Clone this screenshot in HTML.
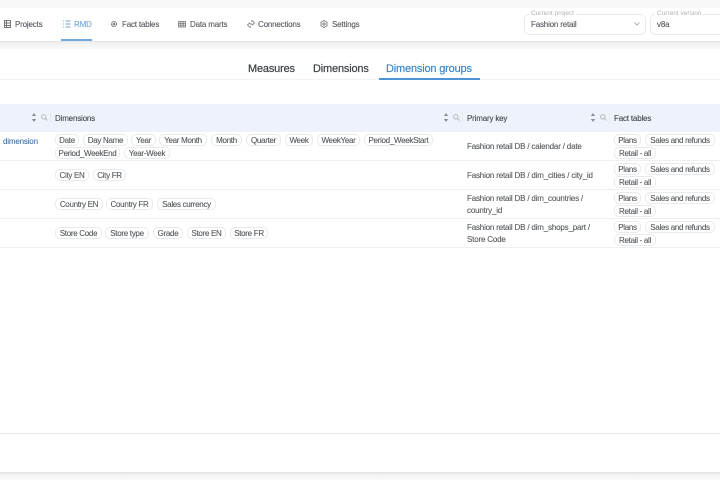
<!DOCTYPE html>
<html><head><meta charset="utf-8">
<style>
html,body{margin:0;padding:0;width:720px;height:480px;overflow:hidden;background:#fff}
body{font-family:"Liberation Sans",sans-serif;color:#3f4347;position:relative}
.a{position:absolute;white-space:nowrap}
.t{position:absolute;white-space:nowrap;font-size:8px;letter-spacing:-.18px;line-height:14px;color:#53575c;-webkit-text-stroke:.1px currentColor}
.c{position:absolute;box-sizing:border-box;height:12px;border:1px solid #e9eaec;border-radius:5px;font-size:8px;letter-spacing:-.3px;line-height:12px;text-align:center;color:#53575c;white-space:nowrap;background:#fff;-webkit-text-stroke:.1px currentColor}
.l{position:absolute;left:0;width:720px;height:1px;background:#eeeff0}
.h{font-size:11px;letter-spacing:-.18px;line-height:14px;-webkit-text-stroke:.2px currentColor}
svg{position:absolute;overflow:visible}
</style></head><body>
<div class="a" style="left:0;top:0;width:720px;height:8px;background:#f8f8f8"></div>
<div class="a" style="left:0;top:41px;width:720px;height:8px;background:linear-gradient(#e4e4e4,#f3f3f3 30%,#f8f8f8)"></div>

<svg style="left:4px;top:20px" width="8" height="9" fill="none" stroke="#777" stroke-width="1"><rect x=".5" y=".5" width="6" height="7"/><path d="M.5 3h6M.5 5.500h6M2.500 .5v7"/></svg>
<div class="t" style="left:15px;top:18px">Projects</div>
<svg style="left:63px;top:20px" width="8" height="8" fill="none" stroke="#6fa8dc" stroke-width=".9"><path d="M2.500 1h5M2.500 4h5M2.500 7h5M.5 .5v1M.5 3.500v1M.5 6.500v1"/></svg>
<div class="t" style="left:74px;top:18px;color:#6aa4da">RMD</div>
<div class="a" style="left:61px;top:39px;width:31px;height:2px;background:#6fa8dc"></div>
<svg style="left:110px;top:20px" width="8" height="8" fill="none" stroke="#777" stroke-width="1"><circle cx="4" cy="4" r="2.500" stroke-dasharray="1.300 .3"/><circle cx="4" cy="4" r=".8"/></svg>
<div class="t" style="left:122px;top:18px">Fact tables</div>
<svg style="left:178px;top:21px" width="9" height="7" fill="none" stroke="#777" stroke-width=".8"><rect x=".5" y=".5" width="7" height="5.500"/><path d="M.5 2.300h7M.5 4.200h7M2.800 .5v5.500M5.200 .5v5.500"/></svg>
<div class="t" style="left:190px;top:18px">Data marts</div>
<svg style="left:247px;top:20px" width="8" height="8" fill="none" stroke="#888" stroke-width=".9"><path d="M4 1.500l1-1 2.500 2.500-2 2-1.500-1.500M4 4.500L2.500 3 .5 5l2.500 2.500 1-1"/></svg>
<div class="t" style="left:258px;top:18px">Connections</div>
<svg style="left:320px;top:20px" width="8" height="8" fill="none" stroke="#777" stroke-width=".9"><path d="M4 .5l3 1.700v3.600l-3 1.700-3-1.700V2.200z"/><circle cx="4" cy="4" r="1.100"/></svg>
<div class="t" style="left:332px;top:18px">Settings</div>

<div class="a" style="left:524px;top:14px;width:122px;height:21px;box-sizing:border-box;border:1px solid #e9eaec;border-radius:5px"></div>
<div class="a" style="left:529px;top:10px;background:#fff;padding:0 2px;font-size:6.500px;line-height:8px;color:#b0b2b5">Current project</div>
<div class="t" style="left:531px;top:18px">Fashion retail</div>
<svg style="left:634px;top:22px" width="8" height="5" fill="none" stroke="#9a9da1" stroke-width=".8"><path d="M.5 .5L3 3 5.500 .5"/></svg>
<div class="a" style="left:650px;top:14px;width:80px;height:21px;box-sizing:border-box;border:1px solid #e9eaec;border-radius:5px"></div>
<div class="a" style="left:655px;top:10px;background:#fff;padding:0 2px;font-size:6.500px;line-height:8px;color:#b0b2b5">Current version</div>
<div class="t" style="left:657px;top:18px">v8a</div>

<div class="a h" style="left:248px;top:62px;color:#3c4043">Measures</div>
<div class="a h" style="left:313px;top:62px;color:#3c4043">Dimensions</div>
<div class="a h" style="left:386px;top:62px;color:#3d87c9">Dimension groups</div>
<div class="l" style="top:79px;background:#f3f3f4"></div>
<div class="a" style="left:379px;top:78px;width:101px;height:1.500px;background:#4d94d6"></div>

<div class="a" style="left:0;top:104px;width:720px;height:28px;background:#eef3fb"></div>
<svg style="left:31px;top:113px" width="6" height="9" fill="#8c9096"><path d="M3 0l2.200 3H.8zM3 9L.8 6h4.400z"/></svg>
<svg style="left:41px;top:114px" width="7" height="7" fill="none" stroke="#b0b4ba" stroke-width=".9"><circle cx="2.800" cy="2.800" r="2.200"/><path d="M4.500 4.500l2 2"/></svg>
<div class="a" style="left:50px;top:112px;width:1px;height:11px;background:#e6eaf1"></div>
<div class="t" style="left:55px;top:112px;color:#3f4347">Dimensions</div>
<svg style="left:443px;top:113px" width="6" height="9" fill="#8c9096"><path d="M3 0l2.200 3H.8zM3 9L.8 6h4.400z"/></svg>
<svg style="left:453px;top:114px" width="7" height="7" fill="none" stroke="#b0b4ba" stroke-width=".9"><circle cx="2.800" cy="2.800" r="2.200"/><path d="M4.500 4.500l2 2"/></svg>
<div class="a" style="left:462px;top:112px;width:1px;height:11px;background:#e6eaf1"></div>
<div class="t" style="left:467px;top:112px;color:#3f4347">Primary key</div>
<svg style="left:590px;top:113px" width="6" height="9" fill="#8c9096"><path d="M3 0l2.200 3H.8zM3 9L.8 6h4.400z"/></svg>
<svg style="left:600px;top:114px" width="7" height="7" fill="none" stroke="#b0b4ba" stroke-width=".9"><circle cx="2.800" cy="2.800" r="2.200"/><path d="M4.500 4.500l2 2"/></svg>
<div class="a" style="left:609px;top:112px;width:1px;height:11px;background:#e6eaf1"></div>
<div class="t" style="left:614px;top:112px;color:#3f4347">Fact tables</div>

<div class="t" style="left:3px;top:135px;color:#3e76ad">dimension</div>

<div class="c" style="left:55px;top:134px;width:24px">Date</div>
<div class="c" style="left:83px;top:134px;width:45px">Day Name</div>
<div class="c" style="left:131px;top:134px;width:25px">Year</div>
<div class="c" style="left:159px;top:134px;width:48px">Year Month</div>
<div class="c" style="left:211px;top:134px;width:31px">Month</div>
<div class="c" style="left:246px;top:134px;width:35px">Quarter</div>
<div class="c" style="left:285px;top:134px;width:28px">Week</div>
<div class="c" style="left:317px;top:134px;width:43px">WeekYear</div>
<div class="c" style="left:364px;top:134px;width:69px">Period_WeekStart</div>
<div class="c" style="left:55px;top:147px;width:65px">Period_WeekEnd</div>
<div class="c" style="left:124px;top:147px;width:46px">Year-Week</div>

<div class="c" style="left:55px;top:169px;width:34px">City EN</div>
<div class="c" style="left:93px;top:169px;width:33px">City FR</div>

<div class="c" style="left:55px;top:198px;width:48px">Country EN</div>
<div class="c" style="left:106px;top:198px;width:47px">Country FR</div>
<div class="c" style="left:157px;top:198px;width:59px">Sales currency</div>

<div class="c" style="left:55px;top:227px;width:47px">Store Code</div>
<div class="c" style="left:105px;top:227px;width:44px">Store type</div>
<div class="c" style="left:153px;top:227px;width:30px">Grade</div>
<div class="c" style="left:187px;top:227px;width:39px">Store EN</div>
<div class="c" style="left:230px;top:227px;width:38px">Store FR</div>

<div class="t" style="left:467px;top:140px">Fashion retail DB / calendar / date</div>
<div class="t" style="left:467px;top:169px">Fashion retail DB / dim_cities / city_id</div>
<div class="t" style="left:467px;top:192px">Fashion retail DB / dim_countries /</div>
<div class="t" style="left:467px;top:204px">country_id</div>
<div class="t" style="left:467px;top:221px">Fashion retail DB / dim_shops_part /</div>
<div class="t" style="left:467px;top:233px">Store Code</div>

<div class="c" style="left:614px;top:134px;width:27px">Plans</div>
<div class="c" style="left:645px;top:134px;width:70px">Sales and refunds</div>
<div class="c" style="left:614px;top:147px;width:42px">Retail - all</div>
<div class="c" style="left:614px;top:163px;width:27px">Plans</div>
<div class="c" style="left:645px;top:163px;width:70px">Sales and refunds</div>
<div class="c" style="left:614px;top:176px;width:42px">Retail - all</div>
<div class="c" style="left:614px;top:192px;width:27px">Plans</div>
<div class="c" style="left:645px;top:192px;width:70px">Sales and refunds</div>
<div class="c" style="left:614px;top:205px;width:42px">Retail - all</div>
<div class="c" style="left:614px;top:221px;width:27px">Plans</div>
<div class="c" style="left:645px;top:221px;width:70px">Sales and refunds</div>
<div class="c" style="left:614px;top:234px;width:42px">Retail - all</div>

<div class="l" style="top:160px"></div>
<div class="l" style="top:189px"></div>
<div class="l" style="top:218px"></div>
<div class="l" style="top:247px"></div>

<div class="l" style="top:433px;background:#e6e6e6"></div>
<div class="a" style="left:0;top:472px;width:720px;height:8px;background:linear-gradient(#e2e2e2,#f4f4f4 40%,#fafafa)"></div>
</body></html>
